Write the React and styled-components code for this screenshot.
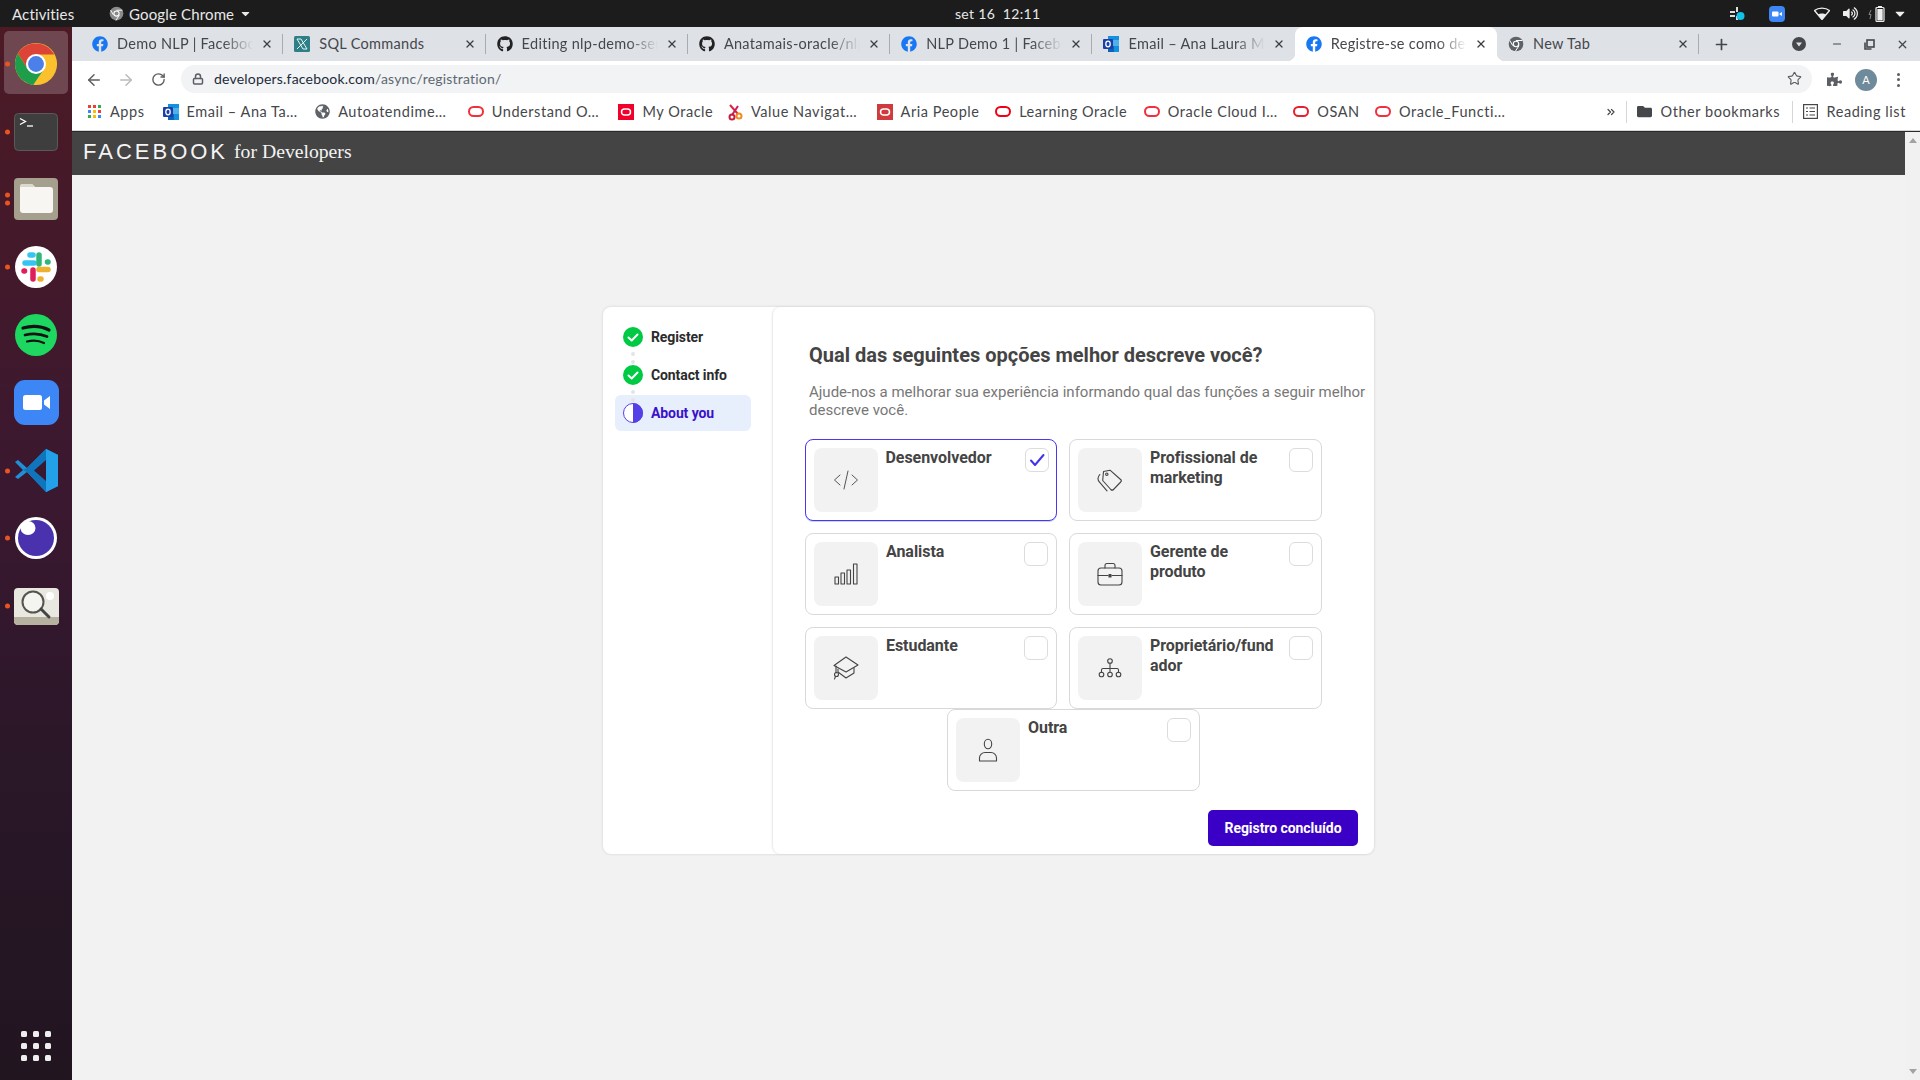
import React from 'react';
import styled, { createGlobalStyle } from 'styled-components';
import { FaFacebook, FaGithub, FaGlobeAmericas, FaPuzzlePiece, FaFolder, FaCaretDown, FaVolumeUp } from 'react-icons/fa';
import { ArrowLeft, ArrowRight, RotateCw, Lock, Star, X, Plus, Minus, ChevronsRight } from 'lucide-react';

const Global = createGlobalStyle`
  html, body { margin: 0; padding: 0; width: 1920px; height: 1080px; overflow: hidden; background: #f2f2f2; }
  * { box-sizing: border-box; }
`;

const UI = `Lato, "Noto Sans", sans-serif`;

const Desktop = styled.div`display:flex;flex-direction:column;width:1920px;height:1080px;overflow:hidden;font-family:${UI};`;
const TopBar = styled.header`display:flex;align-items:center;height:27px;flex:none;background:#1c1c1c;color:#e8e8e8;font-size:15px;letter-spacing:.15px;`;
const TopLeft = styled.div`display:flex;align-items:center;flex:0 0 955px;padding-left:12px;`;
const Activities = styled.span`width:97px;`;
const AppName = styled.span`display:flex;align-items:center;gap:5px;`;
const Clock = styled.span`font-size:14px;letter-spacing:.3px;`;
const Tray = styled.div`display:flex;align-items:center;margin-left:auto;padding-right:13px;`;
const TraySlot = styled.span`display:flex;align-items:center;justify-content:center;width:${p=>p.$w}px;margin-right:${p=>p.$m||0}px;color:#eee;`;

const Body = styled.div`display:flex;flex:1;min-height:0;`;
const Dock = styled.nav`width:72px;flex:none;display:flex;flex-direction:column;padding-top:3px;background:linear-gradient(180deg,#4c1a25 0%,#3a1830 45%,#2a1728 70%,#211520 100%);position:relative;`;
const DockItem = styled.div`height:67.8px;flex:none;display:flex;align-items:center;justify-content:center;position:relative;`;
const DockHighlight = styled.span`position:absolute;left:4px;top:1px;width:64px;height:63px;border-radius:5px;background:rgba(255,255,255,.2);`;
const RunDots = styled.span`position:absolute;left:4.5px;top:50%;transform:translateY(-50%);display:flex;flex-direction:column;gap:3px;`;
const RunDot = styled.i`display:block;width:5px;height:5px;border-radius:50%;background:#e95420;`;
const DockIcon = styled.span`position:relative;display:block;line-height:0;`;
const AppsGrid = styled.div`position:absolute;left:21px;bottom:19px;display:grid;grid-template-columns:repeat(3,6px);gap:6px;`;
const AppsDot = styled.i`display:block;width:6px;height:6px;border-radius:1.5px;background:#eeeeee;`;

const Browser = styled.div`flex:1;display:flex;flex-direction:column;min-width:0;`;
const TabStrip = styled.div`height:34px;flex:none;display:flex;align-items:stretch;background:#dee1e6;padding-left:9px;`;
const Tab = styled.div`
  flex:0 0 202.3px;min-width:0;display:flex;align-items:center;padding:0 10px 1px 11px;position:relative;color:#45474b;font-size:14.5px;letter-spacing:.3px;
  ${p=>p.$active?`background:#fff;border-radius:8px 8px 0 0;
    &::before,&::after{content:"";position:absolute;bottom:0;width:8px;height:8px;}
    &::before{left:-8px;background:radial-gradient(circle at 0 0,transparent 8px,#fff 8.5px);}
    &::after{right:-8px;background:radial-gradient(circle at 100% 0,transparent 8px,#fff 8.5px);}`:''}
  ${p=>p.$sep?`&::after{content:"";position:absolute;right:0;top:7px;height:20px;width:1px;background:#a9abb0;}`:''}
`;
const Fav = styled.span`flex:none;width:16px;height:16px;display:flex;align-items:center;justify-content:center;margin-right:9px;line-height:0;`;
const TabTitle = styled.span`flex:1;min-width:0;white-space:nowrap;overflow:hidden;${p=>p.$fade?`-webkit-mask-image:linear-gradient(90deg,#000 78%,transparent 100%);mask-image:linear-gradient(90deg,#000 78%,transparent 100%);`:''}`;
const TabClose = styled.span`flex:none;width:12px;margin-left:8px;display:flex;color:#3c3e42;line-height:0;`;
const StripRight = styled.div`display:flex;align-items:center;flex:1;color:#45474b;`;
const StripBtn = styled.span`display:flex;align-items:center;justify-content:center;width:${p=>p.$w}px;margin-left:${p=>p.$m||0}px;line-height:0;`;

const Toolbar = styled.div`height:32px;flex:none;background:#fff;display:flex;align-items:flex-end;`;
const NavBtn = styled.span`display:flex;justify-content:center;width:32px;line-height:0;align-self:center;margin-top:5px;color:${p=>p.$off?'#b9bbbe':'#5b5e62'};`;
const NavGroup = styled.div`display:flex;padding-left:6px;width:109px;align-self:stretch;`;
const Omnibox = styled.div`width:1631px;height:28px;border-radius:14px;background:#f1f3f4;display:flex;align-items:center;padding:0 0 1px 11px;font-size:14px;`;
const Url = styled.span`margin-left:10px;color:#1d2a3a;letter-spacing:.2px;`;
const UrlPath = styled.span`color:#5f6872;`;
const StarSlot = styled.span`margin-left:auto;margin-right:10px;line-height:0;color:#5b5e62;`;
const ToolRight = styled.div`display:flex;align-self:center;align-items:center;margin-top:5px;margin-left:6px;`;
const ToolSlot = styled.span`display:flex;justify-content:center;width:32px;color:#5b5e62;line-height:0;`;
const Avatar = styled.span`width:22px;height:22px;border-radius:50%;background:#6f8a9b;color:#fff;font-size:11px;line-height:22px;text-align:center;`;
const DotsV = styled.span`display:flex;flex-direction:column;gap:2.5px;`;
const DotV = styled.i`display:block;width:3px;height:3px;border-radius:50%;background:#5b5e62;`;

const Bookmarks = styled.div`height:38px;flex:none;background:#fff;border-bottom:1px solid #d5d6d8;display:flex;align-items:center;padding-left:14px;color:#45474b;font-size:14.5px;letter-spacing:.55px;`;
const Mark = styled.div`display:flex;align-items:center;margin-right:${p=>p.$m??16.6}px;`;
const MarkIcon = styled.span`flex:none;width:16px;height:16px;display:flex;align-items:center;justify-content:center;margin-right:8px;line-height:0;`;
const MarkText = styled.span`display:inline-block;width:${p=>p.$w}px;white-space:nowrap;`;
const More = styled.span`display:flex;margin-left:80px;line-height:0;color:#45474b;`;
const BarSep = styled.span`width:1px;height:22px;background:#d5d6d8;margin:0 ${p=>p.$r}px 0 ${p=>p.$l}px;`;

const Viewport = styled.div`flex:1;display:flex;min-height:0;border-top:1px solid #2a2a2a;`;
const Page = styled.main`flex:1;display:flex;flex-direction:column;background:#f2f2f2;min-width:0;`;
const SiteHeader = styled.div`height:43px;flex:none;background:#444;display:flex;align-items:center;padding:0 0 4px 11px;color:#f4f4f4;`;
const Wordmark = styled.span`font-family:"Liberation Sans",Arial,sans-serif;font-size:22px;letter-spacing:3px;margin-right:6px;`;
const ForDev = styled.span`font-family:"Liberation Serif",serif;font-size:19.7px;`;
const Scrollbar = styled.div`width:15px;flex:none;background:#f1f1f1;display:flex;flex-direction:column;justify-content:space-between;align-items:center;padding:6px 0;`;
const Arrow = styled.i`display:block;width:0;height:0;border-left:4px solid transparent;border-right:4px solid transparent;${p=>p.$up?'border-bottom:5px solid #a3a3a3;':'border-top:5px solid #a3a3a3;'}`;

const Stage = styled.div`padding:132px 0 0 531px;`;
const Wizard = styled.section`width:771px;height:547px;display:flex;background:#fff;border-radius:8px;box-shadow:0 0 3px rgba(0,0,0,.14);font-family:Roboto,sans-serif;`;
const Side = styled.aside`width:170px;flex:none;padding:12px 0 0 12px;display:flex;flex-direction:column;gap:2px;`;
const Step = styled.div`width:136px;height:36px;display:flex;align-items:center;gap:8px;padding-left:8px;border-radius:6px;position:relative;font-size:14px;font-weight:700;letter-spacing:-.1px;color:${p=>p.$on?'#3a10cc':'#2b2b2b'};background:${p=>p.$on?'#e7eefc':'transparent'};`;
const StepIcon = styled.span`width:20px;height:20px;line-height:0;flex:none;position:relative;z-index:1;`;
const Conn = styled.span`position:absolute;left:16px;top:33px;display:flex;flex-direction:column;gap:4px;z-index:1;`;
const ConnDot = styled.i`display:block;width:4px;height:4px;border-radius:50%;background:#e3e4e6;`;
const Panel = styled.div`flex:1;display:flex;flex-direction:column;border-radius:8px;box-shadow:-1px 0 2px rgba(0,0,0,.1);`;
const Title = styled.h1`margin:36px 0 0 36px;font-size:20px;line-height:24px;font-weight:700;color:#444;letter-spacing:0;`;
const Sub = styled.p`margin:16px 6px 0 36px;font-size:15px;line-height:18px;color:#777;`;
const Grid = styled.div`display:grid;grid-template-columns:252px 253px;column-gap:12px;row-gap:12px;margin:20px 0 0 32px;`;
const Card = styled.div`height:82px;border:${p=>p.$sel?'1.5px solid #4a37ee':'1px solid #d9d9d9'};border-radius:8px;background:#fff;display:flex;align-items:flex-start;padding:${p=>p.$sel?'7.5px':'8px'};box-shadow:${p=>p.$sel?'0 1px 0 #c6d6f8':'none'};`;
const LoneCard = styled(Card)`width:253px;align-self:center;`;
const IconBox = styled.span`flex:none;width:64px;height:64px;border-radius:8px;background:#f2f2f2;display:flex;align-items:center;justify-content:center;line-height:0;`;
const Label = styled.span`flex:1;min-width:0;margin:0 8px;font-size:16px;line-height:20px;font-weight:700;color:#444;overflow-wrap:anywhere;letter-spacing:-.05px;`;
const Check = styled.span`flex:none;width:24px;height:24px;border-radius:6px;border:1px solid #dcdcdc;display:flex;align-items:center;justify-content:center;background:#fff;line-height:0;`;
const Footer = styled.div`display:flex;justify-content:flex-end;margin-top:19px;padding-right:16px;`;
const Submit = styled.button`width:150px;height:36px;border:0;border-radius:5px;background:#3a00c6;color:#fff;font-family:Roboto,sans-serif;font-size:14px;font-weight:700;letter-spacing:-.05px;`;

const S = { fill:'none', stroke:'#444', strokeWidth:1.1, strokeLinecap:'round', strokeLinejoin:'round' };
const IconCode = () => <svg width="26" height="20" viewBox="0 0 26 20" {...S} stroke="#555" strokeWidth="1"><path d="M7 5 1.500 10 7 15M19 5l5.500 5L19 15M15 1l-4 18"/></svg>;
const IconTags = () => <svg width="26" height="23" viewBox="0 0 26 23" {...S}><path d="M6.500 2.500 13 1.200l10.600 9.300c1 1 1 1.600.1 2.500L16.500 20.500c-1 1-1.700 1-2.700 0L5.700 11.500Z"/><circle cx="9.800" cy="5.200" r="1.200"/><path d="M2.800 5.500C.6 8 .6 11 2.500 13.200L10 21.800"/></svg>;
const IconBars = () => <svg width="24" height="22" viewBox="0 0 24 22" {...S}><rect x="1" y="14" width="3.500" height="7"/><rect x="7" y="10" width="3.500" height="11"/><rect x="13" y="7" width="3.500" height="14"/><rect x="19.500" y="1" width="3.500" height="20"/></svg>;
const IconCase = () => <svg width="26" height="24" viewBox="0 0 26 24" {...S}><rect x="1" y="6" width="24" height="17" rx="3"/><path d="M8 6V3.500C8 2 9 1.500 10 1.500h6c1 0 2 .5 2 2V6M1 13.500h10M15 13.500h10"/><rect x="12" y="12.500" width="2" height="2.500" fill="#444"/></svg>;
const IconCap = () => <svg width="26" height="24" viewBox="0 0 26 24" {...S}><path d="M13 1 25 9 13 16 1 9.500Z"/><path d="M5 13v3l8 6 8-5v-5M3 10l0 7"/><circle cx="3.500" cy="18.500" r="2"/><path d="M2.500 20.500 1.500 23"/></svg>;
const IconOrg = () => <svg width="24" height="22" viewBox="0 0 24 22" {...S}><circle cx="12" cy="4" r="2.300"/><circle cx="3.500" cy="17.500" r="2.300"/><circle cx="12" cy="17.500" r="2.300"/><circle cx="20.500" cy="17.500" r="2.300"/><path d="M12 6.300v9M3.500 15.200V13c0-1 .6-1.500 1.500-1.500h14c1 0 1.500.5 1.500 1.500v2.200"/></svg>;
const IconUser = () => <svg width="20" height="24" viewBox="0 0 20 24" {...S}><ellipse cx="10" cy="6" rx="3.700" ry="4.700"/><path d="M1.500 23v-3c0-3 2.500-5.500 5.500-5.500h6c3 0 5.500 2.500 5.500 5.500v3Z"/></svg>;
const CheckMark = () => <svg width="16" height="14" viewBox="0 0 16 14" fill="none" stroke="#4433e8" strokeWidth="2" strokeLinecap="round" strokeLinejoin="round"><path d="M2 7.500 6 12 14.500 2"/></svg>;

const StepDone = () => <svg width="20" height="20" viewBox="0 0 20 20"><circle cx="10" cy="10" r="10" fill="#00c944"/><path d="M5.500 10.500 8.700 13.500 14.500 7.500" fill="none" stroke="#fff" strokeWidth="2" strokeLinecap="round" strokeLinejoin="round"/></svg>;
const StepHalf = () => <svg width="20" height="20" viewBox="0 0 20 20"><circle cx="10" cy="10" r="9.500" fill="#fff" stroke="#5540e8" strokeWidth="1"/><path d="M10 0a10 10 0 0 1 0 20Z" fill="#5540e8"/></svg>;

const FB = () => <FaFacebook size={16} color="#1877f2" />;
const Chrome = ({s=46}) => <svg width={s} height={s} viewBox="0 0 48 48"><circle cx="24" cy="24" r="22" fill="#fbc02d"/><path d="M5 13A22 22 0 0 0 21 45.800L32.600 29H15.400Z" fill="#1e9e4a"/><path d="M43 14A22 22 0 0 0 5 13L15.400 29 24 14Z" fill="#db4437"/><circle cx="24" cy="24" r="10.500" fill="#fff"/><circle cx="24" cy="24" r="8.300" fill="#4a80e8"/></svg>;
const ChromeMono = ({s=16,c='#5f6368'}) => <svg width={s} height={s} viewBox="0 0 48 48"><circle cx="24" cy="24" r="22" fill={c}/><circle cx="24" cy="24" r="10" fill="#fff"/><circle cx="24" cy="24" r="6.500" fill={c}/><path d="M24 13.500h19" stroke="#fff" strokeWidth="3"/><path d="M14.500 29 5 13" stroke="#fff" strokeWidth="3"/><path d="M33 29 22 46" stroke="#fff" strokeWidth="3"/></svg>;
const Oracle = ({c='#f0303c',w=16,h=11,sw=2}) => <svg width={w} height={h} viewBox={`0 0 ${w} ${h}`}><rect x={sw/2} y={sw/2} width={w-sw} height={h-sw} rx={(h-sw)/2} fill="none" stroke={c} strokeWidth={sw}/></svg>;
const OracleBox = ({bg='#f0002a'}) => <svg width="16" height="16" viewBox="0 0 16 16"><rect width="16" height="16" fill={bg}/><rect x="3.500" y="5" width="9" height="6" rx="3" fill="none" stroke="#fff" strokeWidth="1.500"/></svg>;
const Outlook = () => <svg width="16" height="18" viewBox="0 0 16 18"><rect x="5" y="1" width="11" height="16" fill="#1490df"/><rect x="9" y="5" width="7" height="6" fill="#50b0ea"/><rect x="5" y="11" width="6" height="6" fill="#0a64b8"/><rect x="0" y="4" width="10" height="10" rx="1" fill="#1a3fa8"/><ellipse cx="5" cy="9" rx="2.200" ry="2.800" fill="none" stroke="#fff" strokeWidth="1.300"/></svg>;
const AppsIcon = () => <svg width="13" height="13" viewBox="0 0 13 13">{['#ea4335','#ea4335','#34a853','#4285f4','#fbbc04','#ea4335','#34a853','#fbbc04','#4285f4'].map((c,i)=><rect key={i} x={(i%3)*5} y={Math.floor(i/3)*5} width="3" height="3" fill={c}/>)}</svg>;
const SqlIcon = () => <svg width="16" height="16" viewBox="0 0 16 16"><rect width="16" height="16" rx="1.500" fill="#2f7f86"/><path d="M3 3h4l6 10H9ZM13 3 3 13M3 3" fill="none" stroke="#e4f2f2" strokeWidth="1"/></svg>;
const ValueIcon = () => <svg width="16" height="18" viewBox="0 0 16 18" fill="none" strokeWidth="2"><path d="M3 2 11 11" stroke="#d62839"/><path d="M11 3 5 12" stroke="#c81e5a"/><circle cx="12" cy="13" r="2.500" stroke="#f08a24"/><circle cx="5" cy="14" r="2.500" stroke="#c81e3c"/></svg>;
const ReadingIcon = () => <svg width="15" height="15" viewBox="0 0 15 15" fill="none" stroke="#45474b" strokeWidth="1.200"><rect x=".6" y=".6" width="13.800" height="13.800"/><path d="M3 4h2M3 7.500h2M3 11h2M6.500 4h5.500M6.500 7.500h5.500M6.500 11h5.500"/></svg>;

const TerminalTile = () => <svg width="44" height="38" viewBox="0 0 44 38"><rect x=".5" y=".5" width="43" height="37" rx="4" fill="#3e3e3e" stroke="#5a5a5a"/><path d="M6 5.500 11.500 8.500 6 11.500" fill="none" stroke="#fff" strokeWidth="1.300"/><path d="M13 13h6" stroke="#fff" strokeWidth="1.300"/></svg>;
const FilesTile = () => <svg width="44" height="42" viewBox="0 0 44 42"><rect width="44" height="42" rx="4" fill="#a59f8d"/><path d="M6 9c0-2 1-3 3-3h9l3 3h15c2 0 3 1 3 3v20c0 2-1 3-3 3H9c-2 0-3-1-3-3Z" fill="#f7f6f3"/><path d="M6 9c0-2 1-3 3-3h9l3 3Z" fill="#dcd8cd"/></svg>;
const SlackTile = () => <svg width="42" height="42" viewBox="0 0 42 42"><circle cx="21" cy="21" r="21" fill="#fff"/><g strokeLinecap="round" strokeWidth="5.500" fill="none"><path d="M18 9h-3" stroke="#36c5f0"/><path d="M10 17h9" stroke="#36c5f0"/><path d="M24 9v9" stroke="#2eb67d"/><path d="M33 16h-.5" stroke="#2eb67d"/><path d="M24 23.500h9" stroke="#ecb22e"/><path d="M25 33h1" stroke="#ecb22e"/><path d="M18 24v9" stroke="#e01e5a"/><path d="M9 25h.5" stroke="#e01e5a"/></g></svg>;
const SpotifyTile = () => <svg width="42" height="42" viewBox="0 0 42 42"><circle cx="21" cy="21" r="21" fill="#1ed760"/><g fill="none" stroke="#121212" strokeLinecap="round"><path d="M8 14c9-2.500 18-2 26 2" strokeWidth="3.200"/><path d="M10 21c8-2 15-1.500 22 1.500" strokeWidth="2.700"/><path d="M12 27.500c6-1.500 12-1 17 1.500" strokeWidth="2.200"/></g></svg>;
const ZoomTile = () => <svg width="45" height="45" viewBox="0 0 45 45"><rect width="45" height="45" rx="11" fill="#3d86f6"/><rect x="9" y="15" width="19" height="15" rx="2.500" fill="#fff"/><path d="M30 20.500 36 16v13l-6-4.500Z" fill="#fff"/></svg>;
const CodeTile = () => <svg width="44" height="43" viewBox="0 0 44 43"><path d="M32 0 44 6v31l-12 6L13 23 4 30 1 28l8-7-8-8 3-2 9 8Z" fill="#1f8fd8"/><path d="M32 0 13 19l-4 2 4 2 19 20 12-6V6Z" fill="#0f75bd"/><path d="M32 11 20 21.500 32 32Z" fill="#3a1830"/><path d="M32 0 44 6v31l-12 6Z" fill="#22a0e8"/></svg>;
const EyeTile = () => <svg width="42" height="42" viewBox="0 0 42 42"><circle cx="21" cy="21" r="21" fill="#fff"/><circle cx="21" cy="21" r="18" fill="#4a31ad"/><ellipse cx="13" cy="11" rx="7.500" ry="7" fill="#fff"/></svg>;
const SearchTile = () => <svg width="45" height="37" viewBox="0 0 45 37"><rect width="45" height="37" rx="4" fill="#e9e8e0"/><path d="M0 29h45v4c0 2-2 4-4 4H4c-2 0-4-2-4-4Z" fill="#b5b09f"/><circle cx="36" cy="8" r="4" fill="#fff"/><circle cx="19" cy="14" r="10.500" fill="#f4f4f0" stroke="#55554f" strokeWidth="2"/><path d="M27 21l8 8" stroke="#444" strokeWidth="3" strokeLinecap="round"/></svg>;
const Battery = () => <svg width="22" height="18" viewBox="0 0 22 18"><path d="M3 5 1 9.500h2L2 14" fill="none" stroke="#888" strokeWidth="1"/><rect x="8" y="2.500" width="8" height="14" rx="1" fill="none" stroke="#eee" strokeWidth="1.200"/><rect x="10" y="1" width="4" height="2" fill="#eee"/><rect x="9.300" y="4" width="5.400" height="11.500" fill="#eee"/></svg>;
const SlackTray = () => <svg width="16" height="16" viewBox="0 0 16 16"><g fill="#ddd"><rect x="1" y="5" width="5" height="2"/><rect x="7" y="1" width="2" height="5"/><rect x="1" y="9" width="5" height="2"/><rect x="7" y="10" width="2" height="4"/></g><circle cx="11.500" cy="10" r="4" fill="#12c2e9"/></svg>;
const ZoomTray = () => <svg width="16" height="16" viewBox="0 0 16 16"><rect width="16" height="16" rx="4" fill="#3d86f6"/><rect x="3" y="5.500" width="6.500" height="5" rx="1" fill="#fff"/><path d="M10.500 7.500 13 6v4l-2.500-1.500Z" fill="#fff"/></svg>;
const WifiFan = () => <svg width="16" height="13" viewBox="0 0 16 13"><path d="M8 12.500.5 3.500C4.500.2 11.500.2 15.500 3.500Z" fill="none" stroke="#eee" strokeWidth="1.300" strokeLinejoin="round"/><path d="M8 12.500 3.800 7.500C6 6 10 6 12.200 7.500Z" fill="#eee"/></svg>;

const tabs = [
  { t:'Demo NLP | Facebook for Developers', i:<FB/>, fade:true, sep:true },
  { t:'SQL Commands', i:<SqlIcon/>, sep:true },
  { t:'Editing nlp-demo-server/README', i:<FaGithub size={16} color="#222"/>, fade:true, sep:true },
  { t:'Anatamais-oracle/nlp-demo', i:<FaGithub size={16} color="#222"/>, fade:true, sep:true },
  { t:'NLP Demo 1 | Facebook for', i:<FB/>, fade:true, sep:true },
  { t:'Email – Ana Laura Machado', i:<Outlook/>, fade:true },
  { t:'Registre-se como desenvolvedor', i:<FB/>, fade:true, active:true },
  { t:'New Tab', i:<ChromeMono/>, sep:true },
];

const marks = [
  { i:<AppsIcon/>, t:'Apps', w:36 },
  { i:<Outlook/>, t:'Email – Ana Ta…', w:111 },
  { i:<FaGlobeAmericas size={15} color="#5f6368"/>, t:'Autoatendime…', w:113 },
  { i:<Oracle/>, t:'Understand O…', w:110 },
  { i:<OracleBox/>, t:'My Oracle', w:68 },
  { i:<ValueIcon/>, t:'Value Navigat…', w:109 },
  { i:<OracleBox bg="#cf3a3e"/>, t:'Aria People', w:78 },
  { i:<Oracle c="#f00014"/>, t:'Learning Oracle', w:108 },
  { i:<Oracle/>, t:'Oracle Cloud I…', w:109 },
  { i:<Oracle c="#e8202e"/>, t:'OSAN', w:41 },
  { i:<Oracle/>, t:'Oracle_Functi…', w:109 },
];

const roles = [
  { l:'Desenvolvedor', i:<IconCode/>, sel:true },
  { l:'Profissional de marketing', i:<IconTags/> },
  { l:'Analista', i:<IconBars/> },
  { l:'Gerente de produto', i:<IconCase/> },
  { l:'Estudante', i:<IconCap/> },
  { l:'Proprietário/fundador', i:<IconOrg/> },
];

const dock = [
  { n:<Chrome/>, dots:1, hi:true },
  { n:<TerminalTile/>, dots:1 },
  { n:<FilesTile/>, dots:2 },
  { n:<SlackTile/>, dots:1 },
  { n:<SpotifyTile/>, dots:0 },
  { n:<ZoomTile/>, dots:0 },
  { n:<CodeTile/>, dots:1 },
  { n:<EyeTile/>, dots:1 },
  { n:<SearchTile/>, dots:1 },
];

const RoleCard = ({ r }) => (
  <Card $sel={r.sel}>
    <IconBox>{r.i}</IconBox>
    <Label>{r.l}</Label>
    <Check>{r.sel && <CheckMark/>}</Check>
  </Card>
);

export default function App() {
  return (
    <Desktop>
      <Global/>
      <TopBar>
        <TopLeft>
          <Activities>Activities</Activities>
          <AppName><ChromeMono s={15} c="#8a8a8a"/>Google Chrome<FaCaretDown size={13}/></AppName>
        </TopLeft>
        <Clock>set 16&nbsp; 12:11</Clock>
        <Tray>
          <TraySlot $w={18} $m={22}><SlackTray/></TraySlot>
          <TraySlot $w={18} $m={27}><ZoomTray/></TraySlot>
          <TraySlot $w={18} $m={10}><WifiFan/></TraySlot>
          <TraySlot $w={18} $m={9}><FaVolumeUp size={15}/></TraySlot>
          <TraySlot $w={22} $m={3}><Battery/></TraySlot>
          <TraySlot $w={14}><FaCaretDown size={15}/></TraySlot>
        </Tray>
      </TopBar>
      <Body>
        <Dock>
          {dock.map((d,i)=>(
            <DockItem key={i}>
              {d.hi && <DockHighlight/>}
              {d.dots>0 && <RunDots>{Array.from({length:d.dots}).map((_,k)=><RunDot key={k}/>)}</RunDots>}
              <DockIcon>{d.n}</DockIcon>
            </DockItem>
          ))}
          <AppsGrid>{Array.from({length:9}).map((_,k)=><AppsDot key={k}/>)}</AppsGrid>
        </Dock>
        <Browser>
          <TabStrip>
            {tabs.map((t,i)=>(
              <Tab key={i} $active={t.active} $sep={t.sep}>
                <Fav>{t.i}</Fav>
                <TabTitle $fade={t.fade}>{t.t}</TabTitle>
                <TabClose><X size={12} strokeWidth={2.600}/></TabClose>
              </Tab>
            ))}
            <StripRight>
              <StripBtn $w={20} $m={12}><Plus size={17} strokeWidth={2.400}/></StripBtn>
              <StripBtn $w={16} $m={60}><svg width="14" height="14" viewBox="0 0 14 14"><circle cx="7" cy="7" r="7" fill="#45474b"/><path d="M4 5.500h6L7 9.500Z" fill="#dee1e6"/></svg></StripBtn>
              <StripBtn $w={16} $m={22}><Minus size={12} strokeWidth={2.400}/></StripBtn>
              <StripBtn $w={16} $m={16}><svg width="11" height="11" viewBox="0 0 11 11" fill="none" stroke="#45474b" strokeWidth="1.600"><rect x="3" y="1" width="7" height="7"/><path d="M1 3.500V10h6.500"/></svg></StripBtn>
              <StripBtn $w={16} $m={17}><X size={13} strokeWidth={2.400}/></StripBtn>
            </StripRight>
          </TabStrip>
          <Toolbar>
            <NavGroup>
              <NavBtn><ArrowLeft size={18} strokeWidth={2}/></NavBtn>
              <NavBtn $off><ArrowRight size={18} strokeWidth={2}/></NavBtn>
              <NavBtn><RotateCw size={15} strokeWidth={2.200}/></NavBtn>
            </NavGroup>
            <Omnibox>
              <Lock size={12} strokeWidth={3} color="#5b5e62"/>
              <Url>developers.facebook.com<UrlPath>/async/registration/</UrlPath></Url>
              <StarSlot><Star size={15} strokeWidth={1.800}/></StarSlot>
            </Omnibox>
            <ToolRight>
              <ToolSlot><FaPuzzlePiece size={15}/></ToolSlot>
              <ToolSlot><Avatar>A</Avatar></ToolSlot>
              <ToolSlot><DotsV><DotV/><DotV/><DotV/></DotsV></ToolSlot>
            </ToolRight>
          </Toolbar>
          <Bookmarks>
            {marks.map((m,i)=>(
              <Mark key={i}><MarkIcon>{m.i}</MarkIcon><MarkText $w={m.w}>{m.t}</MarkText></Mark>
            ))}
            <More><ChevronsRight size={12} strokeWidth={2.400}/></More>
            <BarSep $l={9} $r={10}/>
            <Mark $m={0}><MarkIcon><FaFolder size={15} color="#45474b"/></MarkIcon><MarkText $w={120}>Other bookmarks</MarkText></Mark>
            <BarSep $l={11} $r={10}/>
            <Mark $m={0}><MarkIcon><ReadingIcon/></MarkIcon><MarkText $w={80}>Reading list</MarkText></Mark>
          </Bookmarks>
          <Viewport>
            <Page>
              <SiteHeader><Wordmark>FACEBOOK</Wordmark><ForDev>for Developers</ForDev></SiteHeader>
              <Stage>
                <Wizard>
                  <Side>
                    <Step><StepIcon><StepDone/></StepIcon>Register<Conn><ConnDot/><ConnDot/></Conn></Step>
                    <Step><StepIcon><StepDone/></StepIcon>Contact info<Conn><ConnDot/><ConnDot/></Conn></Step>
                    <Step $on><StepIcon><StepHalf/></StepIcon>About you</Step>
                  </Side>
                  <Panel>
                    <Title>Qual das seguintes opções melhor descreve você?</Title>
                    <Sub>Ajude-nos a melhorar sua experiência informando qual das funções a seguir melhor descreve você.</Sub>
                    <Grid>{roles.map((r,i)=><RoleCard key={i} r={r}/>)}</Grid>
                    <LoneCard>
                      <IconBox><IconUser/></IconBox>
                      <Label>Outra</Label>
                      <Check/>
                    </LoneCard>
                    <Footer><Submit>Registro concluído</Submit></Footer>
                  </Panel>
                </Wizard>
              </Stage>
            </Page>
            <Scrollbar><Arrow $up/><Arrow/></Scrollbar>
          </Viewport>
        </Browser>
      </Body>
    </Desktop>
  );
}
